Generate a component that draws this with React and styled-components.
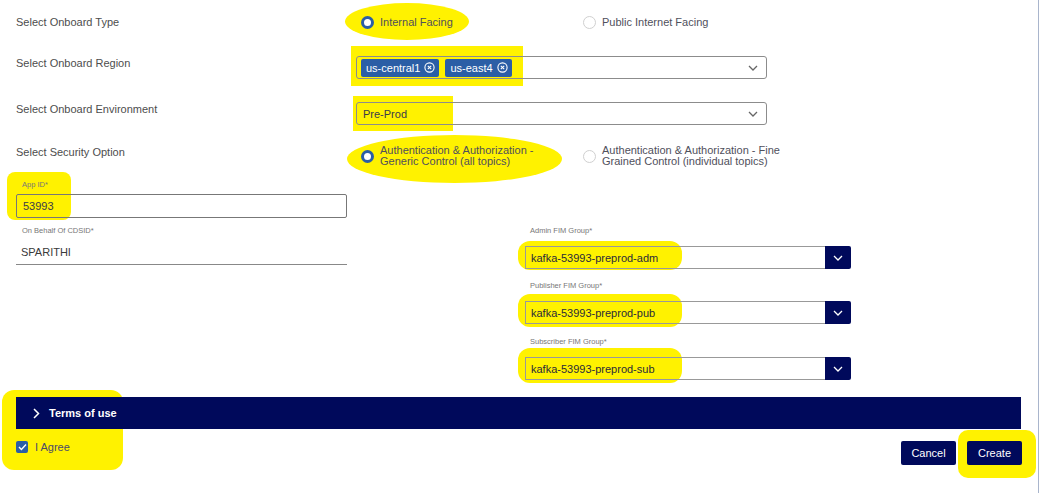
import React from "react";
import styled, { createGlobalStyle } from "styled-components";

const GlobalStyle = createGlobalStyle`
  body {
    margin: 0;
    background: #fff;
    font-family: "Liberation Sans", Arial, sans-serif;
  }
`;

const NAVY = "#00095b";
const BLUE = "#2b5ea6";

const Page = styled.div`
  position: relative;
  width: 1038px;
  height: 493px;
  border-right: 1px solid #a9b5cc;
  overflow: hidden;
  background: #fff;
`;

// the form sits above the yellow marker layer
const Content = styled.div`
  position: relative;
  z-index: 1;
  padding: 15px 17px 0 16px;
`;

const Row = styled.div`
  display: flex;
  align-items: ${(p) => (p.$center ? "center" : "flex-start")};
  margin-top: ${(p) => p.$top || 0}px;
`;

const RowLabel = styled.div`
  width: 340px;
  flex: none;
  font-size: 11px;
  line-height: 14px;
  color: #4d4d4d;
  align-self: flex-start;
`;

const RadioGroup = styled.div`
  display: flex;
  width: 411px;
`;

const RadioOption = styled.label`
  display: flex;
  align-items: center;
  gap: 6px;
  width: ${(p) => p.$w || 222}px;
  padding-left: 5px;
  box-sizing: border-box;
  font-size: 11px;
  line-height: 11px;
  color: #50505c;
  white-space: nowrap;
  flex: none;
`;

const RadioDot = styled.span`
  width: 13px;
  height: 13px;
  border-radius: 50%;
  box-sizing: border-box;
  flex: none;
  border: ${(p) => (p.$on ? `3px solid ${BLUE}` : "1px solid #d0d0d0")};
  background: #fff;
`;

const SelectBox = styled.div`
  width: 411px;
  height: 23px;
  border: 1px solid #8c8c8c;
  border-radius: 3px;
  box-sizing: border-box;
  display: flex;
  align-items: center;
  padding: 0 8px 0 4px;
  gap: 6px;
`;

const SelectValue = styled.span`
  flex: 1;
  font-size: 11px;
  color: #3a3a4a;
  padding-left: ${(p) => p.$pad ?? 2}px;
  display: flex;
  gap: 6px;
  align-items: center;
`;

const Chip = styled.span`
  display: inline-flex;
  align-items: center;
  gap: 4px;
  height: 18px;
  padding: 0 4px 0 5px;
  background: ${BLUE};
  color: #fff;
  border-radius: 2px;
  font-size: 11px;
`;

const FieldLabel = styled.div`
  font-size: 7.5px;
  color: #777;
  padding-left: 6px;
  line-height: 10px;
`;

const FieldBlock = styled.div`
  margin-top: ${(p) => p.$top || 0}px;
`;

const TextBox = styled.div`
  width: 331px;
  height: 24px;
  border: 1px solid #777;
  border-radius: 2px;
  box-sizing: border-box;
  font-size: 11px;
  color: #3a3a4a;
  display: flex;
  align-items: center;
  padding-left: 6px;
  margin-top: 4px;
`;

const Underlined = styled.div`
  width: 331px;
  height: 25px;
  border-bottom: 1px solid #888;
  box-sizing: border-box;
  font-size: 11px;
  color: #3a3a3a;
  display: flex;
  align-items: center;
  padding-left: 5px;
  margin-top: 4px;
`;

const Columns = styled.div`
  display: grid;
  grid-template-columns: 331px 326px;
  column-gap: 178px;
  margin-top: 8px;
`;

const FimGroup = styled.div`
  display: flex;
  flex-direction: column;
  margin-top: ${(p) => p.$top || 0}px;
`;

const FimLabel = styled(FieldLabel)`
  padding-left: 5px;
`;

const FimSelect = styled.div`
  display: flex;
  height: 23px;
  margin-top: 10px;
`;

const FimValue = styled.div`
  flex: 1;
  border: 1px solid #999;
  border-right: none;
  box-sizing: border-box;
  font-size: 11px;
  color: #2a2a3a;
  display: flex;
  align-items: center;
  padding-left: 5px;
`;

const FimButton = styled.div`
  width: 26px;
  background: ${NAVY};
  border-radius: 0 2px 2px 0;
  display: flex;
  align-items: center;
  justify-content: center;
`;

const TermsBar = styled.div`
  margin-top: 17px;
  width: 1005px;
  height: 32px;
  background: ${NAVY};
  display: flex;
  align-items: center;
  gap: 9px;
  padding-left: 17px;
  box-sizing: border-box;
  color: #fff;
  font-weight: bold;
  font-size: 11px;
`;

const Footer = styled.div`
  display: flex;
  justify-content: space-between;
  align-items: flex-start;
  width: 1006px;
  margin-top: 12px;
`;

const Agree = styled.label`
  display: flex;
  align-items: center;
  gap: 7px;
  font-size: 11px;
  color: #4a4a6a;
`;

const Check = styled.span`
  width: 12px;
  height: 12px;
  border-radius: 2px;
  background: ${BLUE};
  display: flex;
  align-items: center;
  justify-content: center;
`;

const Buttons = styled.div`
  display: flex;
  gap: 11px;
`;

const Button = styled.button`
  width: 55px;
  height: 24px;
  background: ${NAVY};
  color: #fff;
  border: none;
  border-radius: 2px;
  font-family: inherit;
  font-size: 11px;
  padding: 0;
`;

// yellow marker strokes drawn over the screenshot
const Highlight = styled.div`
  position: absolute;
  z-index: 0;
  left: ${(p) => p.$x}px;
  top: ${(p) => p.$y}px;
  width: ${(p) => p.$w}px;
  height: ${(p) => p.$h}px;
  border-radius: ${(p) => p.$r};
  background: #fff200;
  pointer-events: none;
`;

const Chevron = ({ color = "#666" }) => (
  <svg width="10" height="6" viewBox="0 0 10 6">
    <path d="M1 1l4 4 4-4" fill="none" stroke={color} strokeWidth="1.3" />
  </svg>
);

const CircleX = () => (
  <svg width="11" height="11" viewBox="0 0 11 11">
    <circle cx="5.5" cy="5.5" r="4.6" fill="none" stroke="#fff" strokeWidth="1.1" />
    <path d="M3.8 3.8l3.4 3.4M7.2 3.8l-3.4 3.4" stroke="#fff" strokeWidth="1.1" />
  </svg>
);

const highlights = [
  { x: 345, y: 3, w: 124, h: 37, r: "50%" },
  { x: 351, y: 46, w: 172, h: 40, r: "0" },
  { x: 353, y: 96, w: 100, h: 35, r: "0" },
  { x: 347, y: 135, w: 215, h: 48, r: "50%" },
  { x: 7, y: 172, w: 64, h: 48, r: "8px" },
  { x: 518, y: 241, w: 164, h: 29, r: "12px" },
  { x: 518, y: 294, w: 164, h: 33, r: "12px" },
  { x: 518, y: 348, w: 164, h: 35, r: "12px" },
  { x: 2, y: 390, w: 121, h: 80, r: "12px" },
  { x: 958, y: 430, w: 78, h: 48, r: "10px" },
];

const fimGroups = [
  { label: "Admin FIM Group*", value: "kafka-53993-preprod-adm", top: 0 },
  { label: "Publisher FIM Group*", value: "kafka-53993-preprod-pub", top: 12 },
  { label: "Subscriber FIM Group*", value: "kafka-53993-preprod-sub", top: 13 },
];

const App = () => {
  return (
    <Page>
      <GlobalStyle />
      {highlights.map((h, i) => (
        <Highlight key={i} $x={h.x} $y={h.y} $w={h.w} $h={h.h} $r={h.r} />
      ))}
      <Content>
        <Row $center>
          <RowLabel>Select Onboard Type</RowLabel>
          <RadioGroup>
            <RadioOption>
              <RadioDot $on />
              Internal Facing
            </RadioOption>
            <RadioOption>
              <RadioDot />
              Public Internet Facing
            </RadioOption>
          </RadioGroup>
        </Row>

        <Row $top={27}>
          <RowLabel>Select Onboard Region</RowLabel>
          <SelectBox>
            <SelectValue $pad={0}>
              <Chip>
                us-central1 <CircleX />
              </Chip>
              <Chip>
                us-east4 <CircleX />
              </Chip>
            </SelectValue>
            <Chevron />
          </SelectBox>
        </Row>

        <Row $top={23}>
          <RowLabel>Select Onboard Environment</RowLabel>
          <SelectBox>
            <SelectValue>Pre-Prod</SelectValue>
            <Chevron />
          </SelectBox>
        </Row>

        <Row $top={20} $center>
          <RowLabel>Select Security Option</RowLabel>
          <RadioGroup>
            <RadioOption>
              <RadioDot $on />
              <span>
                Authentication &amp; Authorization -<br />
                Generic Control (all topics)
              </span>
            </RadioOption>
            <RadioOption $w={200}>
              <RadioDot />
              <span>
                Authentication &amp; Authorization - Fine
                <br />
                Grained Control (individual topics)
              </span>
            </RadioOption>
          </RadioGroup>
        </Row>

        <FieldBlock $top={13}>
          <FieldLabel>App ID*</FieldLabel>
          <TextBox>53993</TextBox>
        </FieldBlock>

        <Columns>
          <div>
            <FieldLabel>On Behalf Of CDSID*</FieldLabel>
            <Underlined>SPARITHI</Underlined>
          </div>
          <div>
            {fimGroups.map((g) => (
              <FimGroup key={g.label} $top={g.top}>
                <FimLabel>{g.label}</FimLabel>
                <FimSelect>
                  <FimValue>{g.value}</FimValue>
                  <FimButton>
                    <Chevron color="#fff" />
                  </FimButton>
                </FimSelect>
              </FimGroup>
            ))}
          </div>
        </Columns>

        <TermsBar>
          <svg width="7" height="11" viewBox="0 0 7 11">
            <path d="M1 1l4.5 4.5L1 10" fill="none" stroke="#fff" strokeWidth="1.5" />
          </svg>
          Terms of use
        </TermsBar>

        <Footer>
          <Agree>
            <Check>
              <svg width="9" height="8" viewBox="0 0 9 8">
                <path d="M1 4l2.4 2.4L8 1.5" fill="none" stroke="#fff" strokeWidth="1.4" />
              </svg>
            </Check>
            I Agree
          </Agree>
          <Buttons>
            <Button>Cancel</Button>
            <Button>Create</Button>
          </Buttons>
        </Footer>
      </Content>
    </Page>
  );
};

export default App;
